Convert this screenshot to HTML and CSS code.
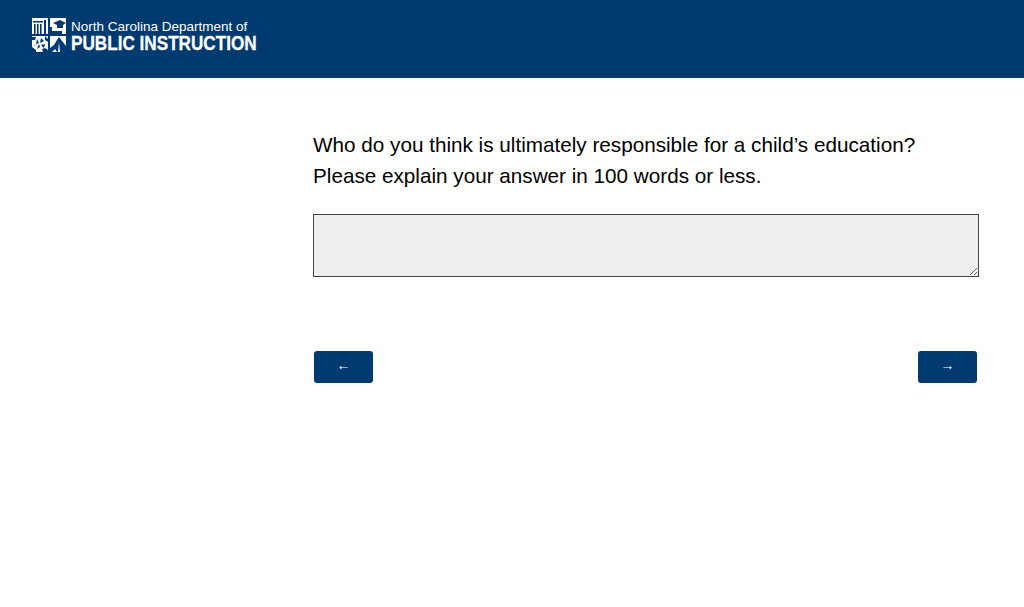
FILE: index.html
```html
<!DOCTYPE html>
<html lang="en">
<head>
<meta charset="utf-8">
<title>Survey</title>
<link rel="stylesheet" href="styles.css">
</head>
<body>
<header class="site-header">
  <div class="logo">
    <svg class="logo-mark" width="34" height="34" viewBox="0 0 34 34" aria-hidden="true">
      <g fill="#fff">
        <rect x="0" y="0" width="16" height="16"/>
        <rect x="18" y="0" width="16" height="16"/>
        <rect x="0" y="18" width="16" height="16"/>
        <rect x="18" y="18" width="16" height="16"/>
      </g>
      <g fill="#003a70">
        <rect x="1" y="3" width="10" height="1.500"/>
        <rect x="2" y="6" width="1.600" height="10"/>
        <rect x="5" y="6" width="1.600" height="10"/>
        <rect x="8" y="6" width="1.600" height="10"/>
        <rect x="12" y="2" width="2" height="14"/>
        <path d="M21 5l7-3 6 3-3 2v3h-6V7z"/>
        <path d="M18 9h2v4h10v3H18z"/>
        <path d="M0 19h4l-1 3H0zM13 18l3 3v3l-3-2zM0 29l4 3v2H0zM10 31l3-1 3 2v2h-5z"/>
        <path d="M5 21l2 4-3 1zM9 20l-1 5 4-2zM13 26l-4 1 3 3zM8 29l-1-3-2 5zM3 27l2-1-4 3z"/>
        <path d="M18 34v-4l4-3 3-5 2-3 3 4 4 5v6z"/>
      </g>
      <path d="M20 34l3-3 2 3zM27 24l1 10h-2z" fill="#fff"/>
    </svg>
    <div class="logo-text">
      <div class="logo-line1">North Carolina Department of</div>
      <div class="logo-line2">PUBLIC INSTRUCTION</div>
    </div>
  </div>
</header>
<main class="content">
  <p class="question">Who do you think is ultimately responsible for a child’s education? Please explain your answer in 100 words or less.</p>
  <textarea class="answer" aria-label="Answer"></textarea>
  <div class="nav">
    <button class="nav-btn" type="button">←</button>
    <button class="nav-btn" type="button">→</button>
  </div>
</main>
</body>
</html>
```
FILE: styles.css
```css
html, body {
  margin: 0;
  padding: 0;
  background: #fff;
  font-family: "Liberation Sans", Arial, sans-serif;
}
.site-header {
  height: 78px;
  background: #003a70;
  display: flex;
  align-items: flex-start;
  padding: 18px 0 0 32px;
  box-sizing: border-box;
}
.logo {
  display: flex;
  gap: 5px;
  color: #fff;
}
.logo-mark {
  display: block;
}
.logo-text {
  display: flex;
  flex-direction: column;
}
.logo-line1 {
  font-size: 13.500px;
  line-height: 16px;
  margin-top: 1px;
  white-space: nowrap;
}
.logo-line2 {
  font-size: 20px;
  line-height: 18px;
  margin-top: -1px;
  font-weight: 700;
  white-space: nowrap;
  -webkit-text-stroke: 0.3px #fff;
  transform: scaleX(0.857);
  transform-origin: left top;
}
.content {
  width: 666px;
  margin-left: 313px;
  padding-top: 51px;
}
.question {
  margin: 0;
  font-size: 20.700px;
  line-height: 31px;
  color: #000;
  width: 640px;
}
.answer {
  display: block;
  box-sizing: border-box;
  width: 666px;
  height: 63px;
  margin-top: 23px;
  background: #efefef;
  border: 1px solid #444;
  padding: 2px;
}
.nav {
  display: flex;
  justify-content: space-between;
  padding: 0 2px 0 1px;
  margin-top: 74px;
}
.nav-btn {
  width: 59px;
  height: 32px;
  background: #003a70;
  border: none;
  border-radius: 3px;
  color: #fff;
  font-size: 14px;
  line-height: 28px;
  font-family: "Liberation Sans", Arial, sans-serif;
  padding: 0 0 4px;
}
```
